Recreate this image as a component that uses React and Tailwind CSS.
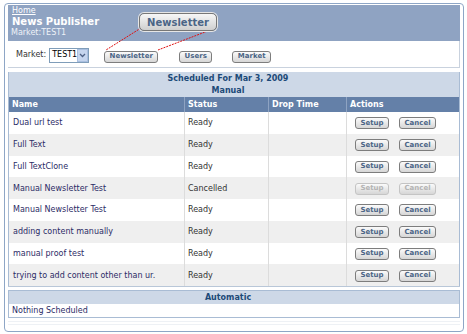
import React from 'react';

const ROWS = [
	{ name: 'Dual url test', status: 'Ready' },
	{ name: 'Full Text', status: 'Ready' },
	{ name: 'Full TextClone', status: 'Ready' },
	{ name: 'Manual Newsletter Test', status: 'Cancelled', off: true },
	{ name: 'Manual Newsletter Test', status: 'Ready' },
	{ name: 'adding content manually', status: 'Ready' },
	{ name: 'manual proof test', status: 'Ready' },
	{ name: 'trying to add content other than ur.', status: 'Ready' },
];

// little grey push button used all over the page
const Btn = ({ label, off, className = '' }) => (
	<div
		className={
			'h-[12px] flex items-center justify-center rounded-[3px] border bg-gradient-to-b from-[#fbfbfb] to-[#d6d6d6] text-[7px] font-bold leading-none ' +
			(off ? 'border-[#c4c4c4] text-[#b4b4b4] ' : 'border-[#7d7d7d] text-[#4b6586] ') +
			className
		}
	>
		{label}
	</div>
);

const Row = ({ row, index }) => (
	<div className={'flex h-[21.75px] items-center text-[8px] ' + (index % 2 ? 'bg-[#efefef]' : 'bg-white')}>
		<div className="w-[176px] h-full flex items-center pl-[4px] pt-[1px] text-[#2c2c66] border-r border-[#dcdcdc]">{row.name}</div>
		<div className="w-[84px] h-full flex items-center pl-[3px] pt-[1px] text-[#333] border-r border-[#dcdcdc]">{row.status}</div>
		<div className="w-[78px] h-full border-r border-[#dcdcdc]"></div>
		<div className="flex-1 h-full flex items-center pl-[8px] pt-[1px] gap-[10px]">
			<Btn label="Setup" off={row.off} className="w-[34px]" />
			<Btn label="Cancel" off={row.off} className="w-[37px]" />
		</div>
	</div>
);

export default function App() {
	return (
		<div className="relative w-[467px] h-[334px] bg-white overflow-hidden" style={{ fontFamily: '"DejaVu Sans", Verdana, sans-serif' }}>
			<div className="pt-[3px] pl-[4px]">
				<div className="w-[460px] h-[329px] border border-[#8ea6c6] rounded-[4px] px-[3px] pt-[1px]">
					{/* header */}
					<div className="h-[36px] bg-[#8fa3c2] pl-[4px] pt-[1px] text-white">
						<div className="text-[8px] leading-[10px] underline">Home</div>
						<div className="text-[10px] leading-[12px] font-bold">News Publisher</div>
						<div className="text-[8px] leading-[10px] text-[#eef2f8] -ml-[1px]">Market:TEST1</div>
					</div>

					{/* nav */}
					<div className="h-[27px] flex items-center pt-[2px] border-r border-b border-[#c9d2de]">
						<span className="ml-[8px] text-[8px] text-[#333]">Market:</span>
						<div className="ml-[3px] w-[40px] h-[15px] border border-[#7f9db9] bg-white flex items-center">
							<span className="flex-1 pl-[2px] text-[8px] text-black leading-none">TEST1</span>
							<div className="w-[12px] h-[13px] bg-[#c5d5ee] border border-[#a9bfe0] flex items-center justify-center">
								<svg width="7" height="5" viewBox="0 0 7 5">
									<path d="M1 1 L3.5 3.5 L6 1" fill="none" stroke="#4d6185" strokeWidth="1.3" />
								</svg>
							</div>
						</div>
						<Btn label="Newsletter" className="ml-[15px] w-[54px] mt-[3px]" />
						<Btn label="Users" className="ml-[21px] w-[33px] mt-[3px]" />
						<Btn label="Market" className="ml-[20px] w-[39px] mt-[3px]" />
					</div>

					{/* manual schedule */}
					<div className="mt-[4px] border-x border-[#a9bcd4]">
						<div className="h-[25px] bg-[#cdd8e7] flex flex-col items-center justify-center pr-[12px] pt-[1px] text-[8px] font-bold text-[#1c4a78] leading-[12px]">
							<div>Scheduled For Mar 3, 2009</div>
							<div>Manual</div>
						</div>
						<div className="flex h-[15px] items-center bg-[#6480a8] text-white text-[8px] font-bold">
							<div className="w-[176px] h-full flex items-center pl-[3px] border-r border-[#8ea3c2]">Name</div>
							<div className="w-[84px] h-full flex items-center pl-[3px] border-r border-[#8ea3c2]">Status</div>
							<div className="w-[78px] h-full flex items-center pl-[3px] border-r border-[#8ea3c2]">Drop Time</div>
							<div className="flex-1 h-full flex items-center pl-[3px]">Actions</div>
						</div>
						{ROWS.map((row, index) => (
							<Row key={index} row={row} index={index} />
						))}
					</div>
					<div className="h-[1px] bg-[#b9c7d8]"></div>

					{/* automatic */}
					<div className="mt-[3px] border border-[#a9bcd4]">
						<div className="h-[13px] bg-[#cdd8e7] flex items-center justify-center pr-[12px] text-[8px] font-bold text-[#1c4a78]">Automatic</div>
						<div className="h-[13px] bg-white flex items-center pl-[3px] text-[8px] text-[#2c2c66]">Nothing Scheduled</div>
					</div>
					<div className="mt-[3px] h-[1px] bg-[#eef1f5]"></div>
					<div className="mt-[2px] h-[1px] bg-[#eef1f5]"></div>
				</div>
			</div>

			{/* callout annotation */}
			<svg className="absolute left-0 top-0 pointer-events-none" width="467" height="334">
				<line x1="141" y1="28" x2="106" y2="50" stroke="#e01010" strokeWidth="1" strokeDasharray="2 1" />
				<line x1="213" y1="29" x2="158" y2="50" stroke="#e01010" strokeWidth="1" strokeDasharray="2 1" />
			</svg>
			<div className="absolute left-[139px] top-[13px] w-[78px] h-[18px] rounded-[5px] border border-[#777] bg-gradient-to-b from-[#f7f7f7] to-[#cfcfcf] flex items-center justify-center text-[10px] font-bold text-[#4b6586] shadow-[0_0_0_1px_#e6e6e6]">
				Newsletter
			</div>
		</div>
	);
}
